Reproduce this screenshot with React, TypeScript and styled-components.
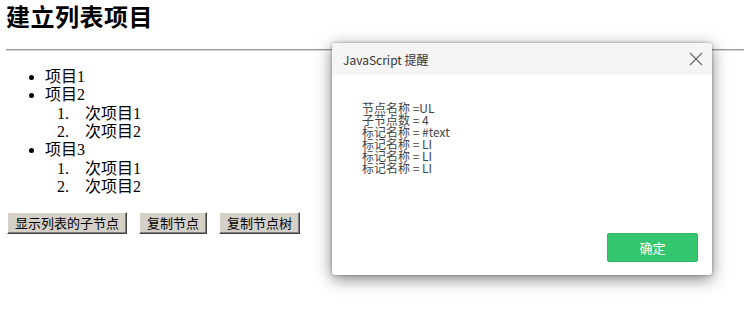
import React from "react";
import styled, { createGlobalStyle } from "styled-components";

const Global = createGlobalStyle`
  html, body { margin: 0; padding: 0; background: #fff; }
  body { font-family: "Liberation Serif", "Noto Sans CJK SC", serif; color: #000; }
`;

const Page = styled.div`
  position: relative;
  width: 744px;
  height: 311px;
  padding: 0 0 0 6px;
  box-sizing: border-box;
  overflow: hidden;
`;

const Heading = styled.h2`
  margin: 4px 0 17px;
  font-size: 24px;
  line-height: 28px;
  font-weight: bold;
  font-family: "Liberation Serif", "Noto Sans CJK SC", serif;
  letter-spacing: 0.5px;
`;

const Rule = styled.hr`
  margin: 0;
  height: 0;
  border: 0;
  border-top: 1px solid #9a9a9a;
  border-bottom: 1px solid #d8d8d8;
`;

const List = styled.ul`
  margin: 17px 0 0;
  padding-left: 39px;
  font-size: 16px;
  line-height: 18.33px;
  list-style: disc;
`;

const NumList = styled.ol`
  margin: 0;
  padding-left: 40px;
  list-style: none;
  counter-reset: n;
`;

const NumItem = styled.li`
  counter-increment: n;
  &::before {
    content: counter(n) ".";
    display: inline-block;
    width: 28px;
    margin-left: -28px;
  }
`;

const Buttons = styled.div`
  display: flex;
  gap: 12px;
  margin: 16px 0 0 1px;
`;

const OldButton = styled.button`
  height: 22px;
  padding: 0 7px;
  background: #d4d0c8;
  border: 0;
  border-top: 1px solid #fff;
  border-left: 1px solid #fff;
  border-right: 1px solid #404040;
  border-bottom: 1px solid #404040;
  box-shadow: inset -1px -1px 0 #808080;
  font-family: "Noto Sans CJK SC", sans-serif;
  font-size: 13px;
  line-height: 18px;
  color: #000;
`;

const Dialog = styled.div`
  position: absolute;
  left: 332px;
  top: 43px;
  width: 380px;
  height: 232px;
  background: #fff;
  border-radius: 3px;
  box-shadow: 0 4px 16px rgba(0, 0, 0, 0.5), 0 0 3px rgba(0, 0, 0, 0.35);
  display: flex;
  flex-direction: column;
  overflow: hidden;
  font-family: "Noto Sans CJK SC", sans-serif;
`;

const DialogHeader = styled.div`
  height: 32px;
  background: #f5f5f5;
  display: flex;
  align-items: center;
  justify-content: space-between;
  padding: 0 9px 0 11px;
  font-size: 12px;
  color: #333;
`;

const CloseIcon = styled.svg`
  width: 14px;
  height: 14px;
`;

const DialogBody = styled.div`
  flex: 1;
  padding: 27px 30px 0;
  font-size: 12px;
  line-height: 12px;
  color: #444;
  white-space: pre-line;
`;

const DialogFooter = styled.div`
  display: flex;
  justify-content: flex-end;
  padding: 0 14px 13px;
`;

const OkButton = styled.button`
  width: 91px;
  height: 29px;
  background: #33c66f;
  border: 1px solid #2db863;
  border-radius: 2px;
  color: #fff;
  font-family: "Noto Sans CJK SC", sans-serif;
  font-size: 13px;
  padding: 0;
`;

const lines = [
  "节点名称 =UL",
  "子节点数 = 4",
  "标记名称 = #text",
  "标记名称 = LI",
  "标记名称 = LI",
  "标记名称 = LI",
];

export default function App() {
  return (
    <Page>
      <Global />
      <Heading>建立列表项目</Heading>
      <Rule />
      <List>
        <li>项目1</li>
        <li>
          项目2
          <NumList>
            <NumItem>次项目1</NumItem>
            <NumItem>次项目2</NumItem>
          </NumList>
        </li>
        <li>
          项目3
          <NumList>
            <NumItem>次项目1</NumItem>
            <NumItem>次项目2</NumItem>
          </NumList>
        </li>
      </List>
      <Buttons>
        <OldButton>显示列表的子节点</OldButton>
        <OldButton>复制节点</OldButton>
        <OldButton>复制节点树</OldButton>
      </Buttons>
      <Dialog>
        <DialogHeader>
          <span>JavaScript 提醒</span>
          <CloseIcon viewBox="0 0 14 14">
            <path d="M1 1 L13 13 M13 1 L1 13" stroke="#666" strokeWidth="1.1" fill="none" />
          </CloseIcon>
        </DialogHeader>
        <DialogBody>{lines.join("\n")}</DialogBody>
        <DialogFooter>
          <OkButton>确定</OkButton>
        </DialogFooter>
      </Dialog>
    </Page>
  );
}
